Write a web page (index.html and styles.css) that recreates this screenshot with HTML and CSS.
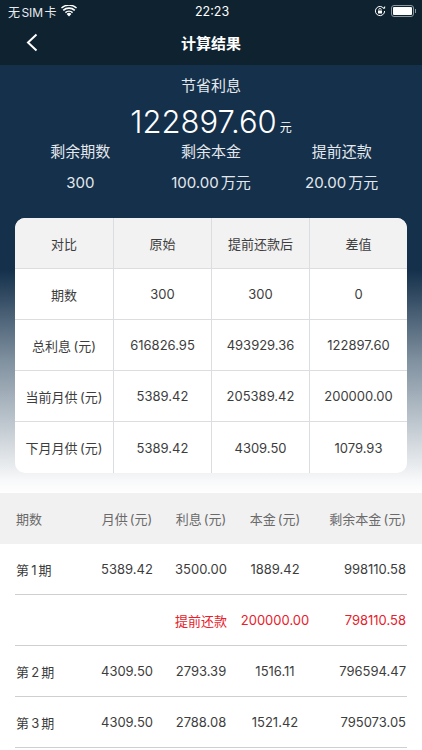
FILE: index.html
```html
<!DOCTYPE html>
<html lang="zh-CN">
<head>
  <meta charset="UTF-8">
  <meta name="viewport" content="width=device-width, initial-scale=1.0">
  <title>计算结果</title>
  <link rel="stylesheet" href="styles.css">
</head>
<body>
  <div class="topbar">
    <div class="status-bar">
      <div class="status-left">
        <span>无 SIM 卡</span>
        <svg class="wifi" width="16" height="12" viewBox="0 0 16 12">
          <path d="M8 11.5 5.6 8.9a3.5 3.5 0 0 1 4.8 0z" fill="#fff"/>
          <path d="M3.9 7.1a6 6 0 0 1 8.2 0l-1 1.1a4.5 4.5 0 0 0-6.2 0z" fill="#fff"/>
          <path d="M1.7 4.8a9.2 9.2 0 0 1 12.6 0l-1.1 1.2a7.6 7.6 0 0 0-10.4 0z" fill="#fff"/>
          <path d="M0 2.9a11.8 11.8 0 0 1 16 0l-.9 1a10.4 10.4 0 0 0-14.2 0z" fill="#fff" transform="translate(0 -.4)"/>
        </svg>
      </div>
      <div class="status-time">22:23</div>
      <div class="status-right">
        <svg width="12" height="12" viewBox="0 0 12 12">
          <path d="M9.9 3.6A4.6 4.6 0 1 0 10.6 6" fill="none" stroke="#fff" stroke-width="1"/>
          <path d="M8.7 3.4h2.4V1z" fill="#fff"/>
          <rect x="4" y="5.4" width="4" height="3" rx=".5" fill="#fff"/>
          <path d="M4.8 5.4V4.6a1.2 1.2 0 0 1 2.4 0v.8" fill="none" stroke="#fff" stroke-width=".8"/>
        </svg>
        <div class="battery"><div class="battery-fill"></div></div>
        <div class="battery-tip"></div>
      </div>
    </div>
    <div class="nav">
      <div class="nav-side">
        <svg width="12" height="19" viewBox="0 0 12 19">
          <path d="M10.5 1.5 2 9.5l8.5 8" fill="none" stroke="#fff" stroke-width="2"/>
        </svg>
      </div>
      <div class="nav-title">计算结果</div>
      <div class="nav-side"></div>
    </div>
  </div>

  <div class="hero">
    <div class="hero-label">节省利息</div>
    <div class="hero-amount">122897.60<span class="hero-unit">元</span></div>
    <div class="stats">
      <div class="stat-name">剩余期数</div>
      <div class="stat-name">剩余本金</div>
      <div class="stat-name">提前还款</div>
      <div class="stat-value">300</div>
      <div class="stat-value">100.00 万元</div>
      <div class="stat-value">20.00 万元</div>
    </div>

    <div class="compare">
      <div class="cell head">对比</div>
      <div class="cell head">原始</div>
      <div class="cell head">提前还款后</div>
      <div class="cell head">差值</div>

      <div class="cell">期数</div>
      <div class="cell">300</div>
      <div class="cell">300</div>
      <div class="cell">0</div>

      <div class="cell">总利息 (元)</div>
      <div class="cell">616826.95</div>
      <div class="cell">493929.36</div>
      <div class="cell">122897.60</div>

      <div class="cell">当前月供 (元)</div>
      <div class="cell">5389.42</div>
      <div class="cell">205389.42</div>
      <div class="cell">200000.00</div>

      <div class="cell">下月月供 (元)</div>
      <div class="cell">5389.42</div>
      <div class="cell">4309.50</div>
      <div class="cell">1079.93</div>
    </div>
  </div>

  <div class="plan-head">
    <div class="plan-row">
      <div>期数</div>
      <div class="mid">月供 (元)</div>
      <div class="mid">利息 (元)</div>
      <div class="mid">本金 (元)</div>
      <div class="end">剩余本金 (元)</div>
    </div>
  </div>
  <div class="plan">
    <div class="plan-row line">
      <div>第 1 期</div>
      <div class="mid">5389.42</div>
      <div class="mid">3500.00</div>
      <div class="mid">1889.42</div>
      <div class="end">998110.58</div>
    </div>
    <div class="plan-row line red">
      <div></div>
      <div></div>
      <div class="mid">提前还款</div>
      <div class="mid">200000.00</div>
      <div class="end">798110.58</div>
    </div>
    <div class="plan-row line">
      <div>第 2 期</div>
      <div class="mid">4309.50</div>
      <div class="mid">2793.39</div>
      <div class="mid">1516.11</div>
      <div class="end">796594.47</div>
    </div>
    <div class="plan-row line">
      <div>第 3 期</div>
      <div class="mid">4309.50</div>
      <div class="mid">2788.08</div>
      <div class="mid">1521.42</div>
      <div class="end">795073.05</div>
    </div>
  </div>
</body>
</html>
```

FILE: styles.css
```css
html, body {
  margin: 0;
  height: 750px;
  overflow: hidden;
  background: #fff;
  font-family: Inter, 'Noto Sans CJK SC', sans-serif;
}
.topbar {
  background: #0e2230;
  height: 65px;
  color: #fff;
}
.status-bar {
  height: 22px;
  padding: 0 6px 0 8px;
  display: flex;
  align-items: center;
  font-size: 12px;
}
.status-left {
  flex: 1;
  display: flex;
  align-items: center;
  gap: 4px;
  color: #e8ecef;
  word-spacing: -2px;
}
.status-time {
  font-size: 12.5px;
  font-weight: 400;
}
.status-right {
  flex: 1;
  display: flex;
  align-items: center;
  justify-content: flex-end;
  gap: 5px;
}
.battery {
  width: 19px;
  height: 8px;
  padding: 1px;
  border: 1px solid #8c979f;
  border-radius: 3px;
}
.battery-fill {
  height: 100%;
  background: #fff;
  border-radius: 1px;
}
.battery-tip {
  width: 1px;
  height: 4px;
  margin-left: -4px;
  background: #8c979f;
}
.nav {
  height: 43px;
  margin-top: -1px;
  display: flex;
  align-items: center;
}
.nav-side {
  width: 100px;
  padding-left: 26px;
  box-sizing: border-box;
  display: flex;
}
.nav-title {
  flex: 1;
  text-align: center;
  font-size: 15px;
  font-weight: 700;
}
.hero {
  height: 428px;
  padding: 0 15px;
  box-sizing: border-box;
  color: #fff;
  background: linear-gradient(180deg, #14304b 0, #14304b 205px, #7f909f 295px, #f7f8f9 415px, #fff 428px);
}
.hero-label {
  padding-top: 10px;
  height: 22px;
  line-height: 22px;
  text-align: center;
  font-size: 15px;
  color: #e4e8ec;
}
.hero-amount {
  margin-top: 9px;
  height: 30px;
  line-height: 32px;
  text-align: center;
  font-size: 31px;
  font-weight: 300;
}
.hero-unit {
  margin-left: 3px;
  font-size: 12px;
  font-weight: 400;
  position: relative;
  top: -1px;
}
.stats {
  display: grid;
  grid-template-columns: repeat(3, 1fr);
  grid-auto-rows: 31px;
  text-align: center;
  font-size: 15px;
  line-height: 31px;
  color: #e4e8ec;
}
.stat-value {
  word-spacing: -2px;
}
.compare {
  margin-top: 20px;
  height: 255px;
  display: grid;
  grid-template-columns: 99px 98px 98px 1fr;
  grid-template-rows: repeat(5, 1fr);
  background: #fff;
  border-radius: 10px;
  overflow: hidden;
  color: #3d3d3d;
  font-size: 13px;
}
.cell {
  display: flex;
  align-items: center;
  justify-content: center;
  border-right: 1px solid #dcdde0;
  border-bottom: 1px solid #dcdde0;
  word-spacing: -1px;
}
.cell:nth-child(4n) {
  border-right: 0;
}
.cell:nth-last-child(-n+4) {
  border-bottom: 0;
}
.head {
  background: #f2f2f2;
}
.plan-head {
  background: #f1f1f1;
  color: #6a6a6a;
}
.plan {
  color: #3d3d3d;
}
.plan-row {
  height: 51px;
  margin: 0 15px;
  box-sizing: border-box;
  display: grid;
  grid-template-columns: 75px 74px 74px 74px 1fr;
  align-items: center;
  font-size: 13px;
  word-spacing: -1.5px;
  white-space: nowrap;
}
.plan-row > :first-child {
  padding-left: 1px;
}
.plan-row.line {
  border-bottom: 1px solid #cfcfd1;
}
.plan-row .mid {
  text-align: center;
}
.plan-row .end {
  padding-right: 1px;
  text-align: right;
}
.red {
  color: #e8202a;
}
```
